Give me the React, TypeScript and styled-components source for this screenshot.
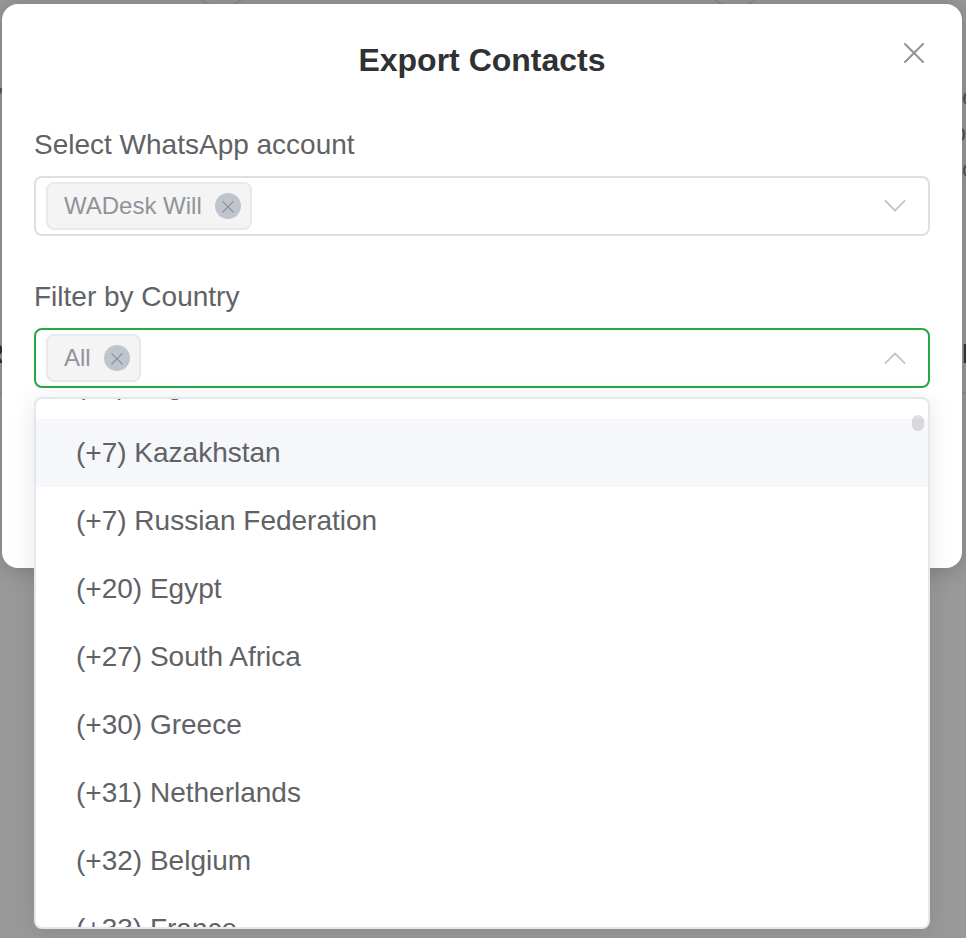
import React, { useEffect, useRef, useState } from "react";
import styled, { createGlobalStyle } from "styled-components";

const GlobalStyle = createGlobalStyle`
  *, *::before, *::after { box-sizing: border-box; }
  html, body { margin: 0; padding: 0; }
  body {
    background: #999;
    font-family: "Liberation Sans", Arial, sans-serif;
    overflow: hidden;
  }
`;

const Page = styled.div`
  position: relative;
  min-height: 100vh;
  padding: 4px 4px 0 2px;
  overflow: hidden;
`;

const Underlay = styled.div`
  position: absolute;
  inset: 0;
  display: flex;
  justify-content: space-between;
  overflow: hidden;
`;

const Rings = styled.div`
  flex: 1;
  display: flex;
  align-items: flex-start;
  gap: 450px;
  padding-left: 185px;
  margin-top: -56px;
  svg { flex: none; }
`;

const SideColumn = styled.div<{ $align: "flex-start" | "flex-end" }>`
  display: flex;
  flex-direction: column;
  align-items: ${(p) => p.$align};
  width: 4px;
  padding-top: 79px;
`;

const SideLines = styled.div<{ $align: "flex-start" | "flex-end" }>`
  display: flex;
  flex-direction: column;
  align-items: ${(p) => p.$align};
  width: 4px;
  height: 253px;
  font-size: 24px;
  line-height: 36px;
  color: #555;
`;

const SideText = styled.span<{ $end?: boolean }>`
  align-self: ${(p) => (p.$end ? "flex-end" : "auto")};
`;

const SideHeading = styled.div<{ $align: "flex-start" | "flex-end" }>`
  display: flex;
  justify-content: ${(p) => p.$align};
  width: 4px;
  height: 62px;
  border-bottom: 2px solid #8f8f8f;
  font-size: 28px;
  line-height: 44px;
  font-weight: 700;
  color: #333;
`;

const Dialog = styled.section`
  position: relative;
  border-radius: 16px;
  background: #fff;
  box-shadow: 0 2px 24px rgba(0, 0, 0, 0.2);
  padding: 32px 32px 180px;
`;

const Header = styled.header`
  display: flex;
  justify-content: center;
  align-items: center;
  height: 48px;
  margin-bottom: 40px;
`;

const Title = styled.h1`
  margin: 0;
  font-size: 32px;
  line-height: 48px;
  font-weight: 700;
  color: #303133;
`;

const CloseButton = styled.button`
  position: absolute;
  top: 32px;
  right: 32px;
  width: 32px;
  height: 32px;
  padding: 0;
  border: 0;
  background: none;
  color: #909399;
  cursor: pointer;
  svg { display: block; }
`;

const Form = styled.div`
  display: flex;
  flex-direction: column;
  gap: 40px;
`;

const Field = styled.div`
  display: flex;
  flex-direction: column;
  gap: 10px;
`;

const Label = styled.label`
  font-size: 28px;
  line-height: 42px;
  color: #606266;
`;

const SelectBox = styled.div<{ $open?: boolean }>`
  position: relative;
  display: flex;
  align-items: center;
  height: 60px;
  padding: 0 20px 0 10px;
  border: 2px solid ${(p) => (p.$open ? "#28a745" : "#dcdfe6")};
  border-radius: 8px;
  background: #fff;
`;

const Tag = styled.span`
  display: flex;
  align-items: center;
  gap: 13px;
  height: 48px;
  padding: 0 9px 0 16px;
  border: 2px solid #e9e9eb;
  border-radius: 8px;
  background: #f4f4f5;
  color: #909399;
  font-size: 24px;
  line-height: 44px;
  white-space: nowrap;
`;

const TagRemove = styled.button`
  width: 26px;
  height: 26px;
  padding: 0;
  border: 0;
  border-radius: 50%;
  background: #c0c4cc;
  color: #909399;
  cursor: pointer;
  svg { display: block; }
`;

const Search = styled.input`
  flex: 1;
  min-width: 0;
  height: 48px;
  margin: 0 8px;
  border: 0;
  outline: 0;
  background: transparent;
  font: inherit;
  font-size: 28px;
  color: #606266;
`;

const Toggle = styled.button`
  width: 26px;
  height: 26px;
  padding: 0;
  border: 0;
  background: none;
  color: #c0c4cc;
  cursor: pointer;
  svg { display: block; }
`;

const Dropdown = styled.div`
  position: absolute;
  z-index: 2;
  top: 67px;
  left: -2px;
  right: -2px;
  border: 2px solid #e4e7ed;
  border-radius: 8px;
  background: #fff;
  box-shadow: 0 4px 24px rgba(0, 0, 0, 0.1);
  overflow: hidden;
`;

const OptionList = styled.ul`
  height: 528px;
  margin: 0;
  padding: 12px 0;
  list-style: none;
  overflow-y: auto;
  scrollbar-width: none;
`;

const Option = styled.li<{ $active?: boolean }>`
  height: 68px;
  padding: 0 40px;
  font-size: 28px;
  line-height: 68px;
  color: #606266;
  background: ${(p) => (p.$active ? "#f5f7fa" : "transparent")};
  white-space: nowrap;
  cursor: pointer;
`;

const ScrollThumb = styled.div`
  position: absolute;
  top: 16px;
  right: 4px;
  width: 12px;
  height: 16px;
  border-radius: 6px;
  background: rgba(144, 147, 153, 0.3);
`;

const countries = [
  "All",
  "(+1) Canada",
  "(+1) Anguilla",
  "(+7) Kazakhstan",
  "(+7) Russian Federation",
  "(+20) Egypt",
  "(+27) South Africa",
  "(+30) Greece",
  "(+31) Netherlands",
  "(+32) Belgium",
  "(+33) France",
  "(+34) Spain",
  "(+36) Hungary",
];

const Ring = () => (
  <svg width="64" height="64" viewBox="0 0 64 64" fill="none" stroke="#8c8c8c" strokeWidth="2">
    <circle cx="32" cy="32" r="31" />
  </svg>
);

const SmallCross = () => (
  <svg width="26" height="26" viewBox="0 0 26 26" fill="none" stroke="currentColor" strokeWidth="1.3" strokeLinecap="round" aria-hidden="true">
    <path d="M7.8 8.6l10.4 10.4M18.2 8.6L7.8 19" />
  </svg>
);

const Chevron = ({ up }: { up?: boolean }) => (
  <svg width="26" height="26" viewBox="0 0 26 26" fill="none" stroke="currentColor" strokeWidth="1.8" strokeLinecap="round" strokeLinejoin="round" aria-hidden="true">
    <path d={up ? "M3.4 18.2L13 8.5l9.6 9.7" : "M3.4 7.8L13 17.5l9.6-9.7"} />
  </svg>
);

const SelectedTag = ({ text }: { text: string }) => (
  <Tag>
    {text}
    <TagRemove type="button" aria-label={`Remove ${text}`}>
      <SmallCross />
    </TagRemove>
  </Tag>
);

export default function App() {
  const list = useRef<HTMLUListElement>(null);
  const [active, setActive] = useState("(+7) Kazakhstan");

  useEffect(() => {
    if (list.current) list.current.scrollTop = 196;
  }, []);

  return (
    <>
      <GlobalStyle />
      <Page>
        <Underlay aria-hidden="true">
          <SideColumn $align="flex-end">
            <SideLines $align="flex-end">
              <SideText>7</SideText>
            </SideLines>
            <SideHeading $align="flex-end">R</SideHeading>
          </SideColumn>
          <Rings>
            <Ring />
            <Ring />
          </Rings>
          <SideColumn $align="flex-start">
            <SideLines $align="flex-start">
              <SideText>e</SideText>
              <SideText $end>o</SideText>
              <SideText>c</SideText>
            </SideLines>
            <SideHeading $align="flex-start">D</SideHeading>
          </SideColumn>
        </Underlay>

        <Dialog role="dialog" aria-labelledby="dialog-title">
          <Header>
            <Title id="dialog-title">Export Contacts</Title>
            <CloseButton type="button" aria-label="Close">
              <svg width="32" height="32" viewBox="0 0 32 32" fill="none" stroke="currentColor" strokeWidth="2" strokeLinecap="round" aria-hidden="true">
                <path d="M7 8l18 18M25 8L7 26" />
              </svg>
            </CloseButton>
          </Header>

          <Form>
            <Field>
              <Label htmlFor="account">Select WhatsApp account</Label>
              <SelectBox>
                <SelectedTag text="WADesk Will" />
                <Search id="account" type="text" autoComplete="off" />
                <Toggle type="button" aria-label="Show accounts">
                  <Chevron />
                </Toggle>
              </SelectBox>
            </Field>

            <Field>
              <Label htmlFor="country">Filter by Country</Label>
              <SelectBox $open>
                <SelectedTag text="All" />
                <Search id="country" type="text" autoComplete="off" />
                <Toggle type="button" aria-label="Hide countries" aria-expanded="true">
                  <Chevron up />
                </Toggle>
                <Dropdown>
                  <OptionList ref={list} role="listbox" aria-label="Countries">
                    {countries.map((name) => (
                      <Option
                        key={name}
                        role="option"
                        aria-selected={name === "All"}
                        $active={name === active}
                        onMouseEnter={() => setActive(name)}
                      >
                        {name}
                      </Option>
                    ))}
                  </OptionList>
                  <ScrollThumb />
                </Dropdown>
              </SelectBox>
            </Field>
          </Form>
        </Dialog>
      </Page>
    </>
  );
}
